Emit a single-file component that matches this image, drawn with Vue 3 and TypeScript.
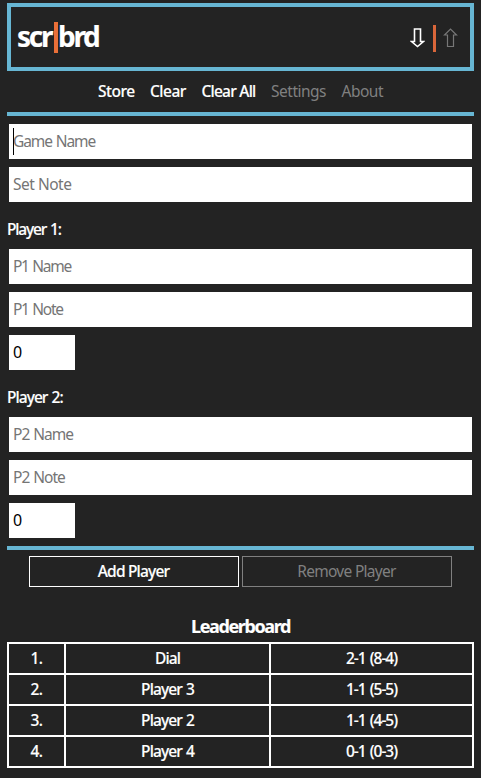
<script setup lang="ts">
import { ref } from 'vue'

interface MenuItem { label: string; key: string; enabled: boolean }
interface Player { id: number; name: string; note: string; score: string }
interface Standing { rank: number; name: string; record: string }

const menu: MenuItem[] = [
  { label: 'Store', key: 'store', enabled: true },
  { label: 'Clear', key: 'clear', enabled: true },
  { label: 'Clear All', key: 'clear-all', enabled: true },
  { label: 'Settings', key: 'settings', enabled: false },
  { label: 'About', key: 'about', enabled: false },
]
const gameName = ref('')
const setNote = ref('')
const players = ref<Player[]>([
  { id: 1, name: '', note: '', score: '0' },
  { id: 2, name: '', note: '', score: '0' },
])
const standings: Standing[] = [
  { rank: 1, name: 'Dial', record: '2-1 (8-4)' },
  { rank: 2, name: 'Player 3', record: '1-1 (5-5)' },
  { rank: 3, name: 'Player 2', record: '1-1 (4-5)' },
  { rank: 4, name: 'Player 4', record: '0-1 (0-3)' },
]
</script>

<template>
  <main class="page">
    <header class="header">
      <h1 class="logo"><span class="scr">scr</span><i class="logo-bar"></i><span class="brd">brd</span></h1>
      <div class="arrows">
        <svg class="arrow" width="15" height="20" viewBox="0 0 15 20"><path d="M4.5 1h6v12.5h3L7.5 18.5l-6-5h3z" /></svg>
        <i class="arrow-bar"></i>
        <svg class="arrow off" width="15" height="20" viewBox="0 0 15 20"><path d="M4.5 18.5h6V7h3L7.5 1l-6 6h3z" /></svg>
      </div>
    </header>
    <nav class="menu">
      <a v-for="m in menu" :key="m.key" :class="[m.key, { disabled: !m.enabled }]">{{ m.label }}</a>
    </nav>
    <section class="form">
      <div class="focused">
        <input v-model="gameName" class="field game" placeholder="Game Name" />
        <i class="caret"></i>
      </div>
      <input v-model="setNote" class="field" placeholder="Set Note" />
      <template v-for="p in players" :key="p.id">
        <label class="player" :class="`player-${p.id}`">Player {{ p.id }}:</label>
        <input v-model="p.name" class="field" :class="`detail-${p.id}`" :placeholder="`P${p.id} Name`" />
        <input v-model="p.note" class="field" :class="`detail-${p.id}`" :placeholder="`P${p.id} Note`" />
        <input v-model="p.score" class="field score" />
      </template>
    </section>
    <div class="actions">
      <button class="add">Add Player</button>
      <button class="remove" disabled>Remove Player</button>
    </div>
    <h2 class="title">Leaderboard</h2>
    <div class="board">
      <template v-for="s in standings" :key="s.rank">
        <span>{{ s.rank }}.</span>
        <span class="name">{{ s.name }}</span>
        <span class="record">{{ s.record }}</span>
      </template>
    </div>
  </main>
</template>

<style>
body { background: #232323; }
</style>

<style scoped>
.page {
  box-sizing: border-box;
  width: 481px;
  height: 778px;
  padding: 3px 7px 0;
  background: #232323;
  color: #fff;
  font: 500 15.5px/24px "Noto Sans", "Open Sans", sans-serif;
  letter-spacing: -0.5px;
  -webkit-text-stroke-width: 0.15px;
  overflow: hidden;
}
.header {
  box-sizing: border-box;
  height: 68px;
  border: 4px solid #67b6d3;
  padding: 0 12px 0 6px;
  display: flex;
  align-items: center;
  justify-content: space-between;
}
.logo {
  margin: 0;
  display: flex;
  align-items: center;
  font-size: 28px;
  line-height: 58px;
  font-weight: 700;
  letter-spacing: -2.3px;
}
.logo span { height: 60px; }
.scr { width: 37px; }
.logo-bar { width: 4px; height: 31px; margin-top: 0; background: #e96f38; }
.arrows { display: flex; align-items: center; height: 60px; padding-top: 1px; box-sizing: border-box; }
.arrow { display: block; fill: none; stroke: #fff; stroke-width: 1.6; }
.arrow.off { stroke: #777; stroke-width: 1.2; }
.arrow-bar { width: 3px; height: 27px; margin: 1px 7px 0 8px; background: #d9663a; }
.menu {
  box-sizing: border-box;
  height: 45px;
  border-bottom: 4px solid #67b6d3;
  display: flex;
  justify-content: center;
  gap: 15.5px;
  line-height: 40px;
}
.menu a { white-space: nowrap; }
.menu .clear-all { letter-spacing: -0.75px; }
.menu .disabled { color: #808080; font-weight: 400; -webkit-text-stroke-width: 0; }
.form {
  box-sizing: border-box;
  height: 434px;
  border-bottom: 4px solid #67b6d3;
  padding: 8px 2px 0;
  display: flex;
  flex-direction: column;
  align-items: flex-start;
}
.focused { position: relative; width: 100%; height: 43px; }
.caret { position: absolute; left: 4px; top: 4px; width: 1px; height: 27px; background: #000; }
.field {
  box-sizing: border-box;
  display: block;
  width: 100%;
  height: 35px;
  margin: 0 0 8px;
  padding: 0 4px 1px;
  border: 0;
  border-radius: 0;
  outline: none;
  background: #fff;
  color: #000;
  font: 400 15.5px/24px "Noto Sans", "Open Sans", sans-serif;
  letter-spacing: -0.5px;
  -webkit-text-stroke-width: 0;
}
.field::placeholder { color: #757575; opacity: 1; }
.field.game { letter-spacing: -1.1px; word-spacing: 1px; }
.field.detail-1 { letter-spacing: -1.3px; word-spacing: 1px; }
.field.detail-2 { letter-spacing: -1px; word-spacing: 1px; }
.field.score { width: 66px; font-size: 16px; }
.player { height: 39px; line-height: 38px; margin-left: -2px; word-spacing: 1px; }
.player-1 { letter-spacing: -1.15px; }
.player-2 { letter-spacing: -0.95px; }
.actions { display: flex; justify-content: center; gap: 3px; padding-top: 6px; margin-left: -1px; }
.actions button {
  box-sizing: border-box;
  width: 210px;
  height: 31px;
  padding: 0 0 1px;
  border: 1px solid #fff;
  background: transparent;
  color: #fff;
  font: inherit;
  letter-spacing: -0.8px;
  -webkit-text-stroke-width: 0.15px;
}
.actions .remove { border-color: #808080; color: #808080; font-weight: 400; letter-spacing: -0.7px; -webkit-text-stroke-width: 0; }
.title {
  margin: 25px 0 0;
  height: 30px;
  text-align: center;
  font-size: 18px;
  line-height: 29px;
  font-weight: 700;
  letter-spacing: -1.4px;
}
.board {
  display: grid;
  grid-template-columns: 55px 203px 201px;
  grid-auto-rows: 29px;
  gap: 2px;
  padding: 2px;
  background: #fff;
}
.board span { background: #232323; text-align: center; line-height: 28px; }
.board .name { letter-spacing: -0.9px; word-spacing: 1px; }
.board .record { letter-spacing: -1px; word-spacing: 1px; }
</style>
